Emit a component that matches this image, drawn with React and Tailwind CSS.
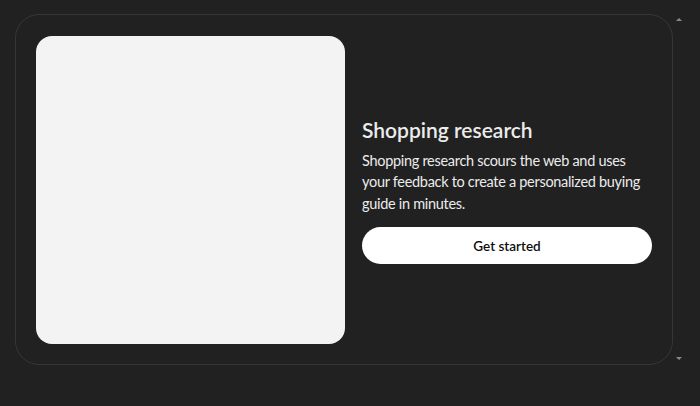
export default function App() {
  return (
    <div className="relative w-[700px] h-[406px] bg-[#212121] overflow-hidden" style={{ fontFamily: 'Lato, "Noto Sans", sans-serif' }}>
      <div className="pt-[14px] pl-[15px]">
        <div className="w-[658px] h-[351px] rounded-[24px] border border-[#363636] p-[20px] flex items-center gap-[17px]">
          <div className="w-[309px] h-[308px] shrink-0 rounded-[16px] bg-[#f3f3f3]" />
          <div className="flex-1 flex flex-col pt-[2px]">
            <h2 className="text-[21px] leading-[26px] font-semibold text-[#ececec]">Shopping research</h2>
            <p className="mt-[7px] text-[14.5px] leading-[21.5px] tracking-[-0.3px] text-[#ececec]">
              Shopping research scours the web and uses your feedback to create a personalized buying guide in minutes.
            </p>
            <button className="mt-[13px] h-[37px] w-[290px] rounded-full bg-white text-[#0d0d0d] text-[13.5px] font-semibold">
              Get started
            </button>
          </div>
        </div>
      </div>
      <div className="absolute left-[676px] top-[18px] w-0 h-0 border-l-[3px] border-r-[3px] border-b-[3px] border-l-transparent border-r-transparent border-b-[#8a8a8a]" />
      <div className="absolute left-[676px] top-[357px] w-0 h-0 border-l-[3px] border-r-[3px] border-t-[3px] border-l-transparent border-r-transparent border-t-[#8a8a8a]" />
    </div>
  );
}
